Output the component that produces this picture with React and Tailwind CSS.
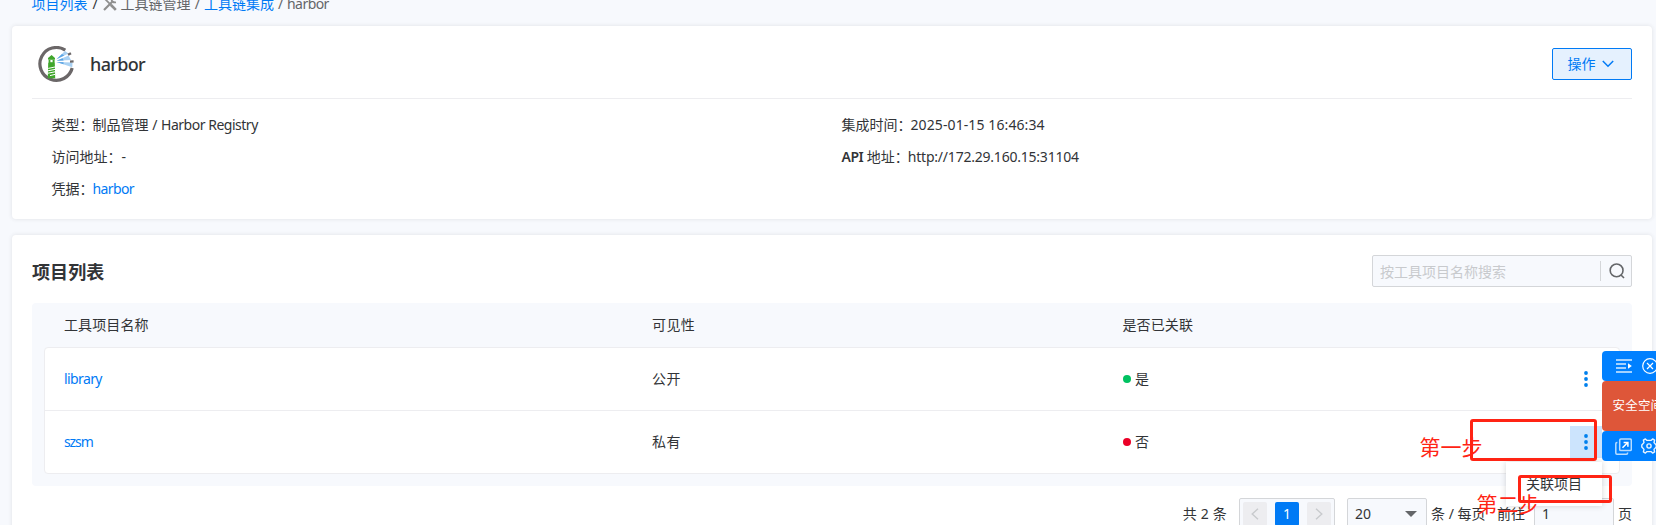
import React from "react";

function Logo() {
  return (
    <svg viewBox="0 0 36 36" className="h-9 w-9">
      <path d="M27.3 4.2A16.4 16.4 0 1 0 34.2 22" fill="none" stroke="#6b6768" strokeWidth="3.2" />
      <path d="M18.5 13.2 27 5l3.5 2.6zM18.5 14.8 30.5 9.5l2.5 4.6zM18.5 16 34.5 16.5l-.2 4.8z" fill="#a9d1f3" />
      <path d="M18.5 13.2 24 8l2.2 1.6zM18.5 14.8l6-2.6 1.2 2.4zM18.5 16l7 .3v2z" fill="#5ba4e4" />
      <path d="M30 8.8l3-1.6M32 15.6l3.6-.2" stroke="#6b6768" strokeWidth="2.4" />
      <path d="M13.6 9 17 12v1.6H10V12zM10.2 16.8h6.6l.4 15.4H9.8z" fill="#40a62c" />
      <path d="M10.6 13.4h6v3.6h-6z" fill="#40a62c" />
      <path d="M12.4 14h2.2v2.2h-2.2z" fill="#fff" />
      <path d="M10.2 22.4l6.8-1.4M10 24.8l7-1.4M10 27.2l7-1.4M12 29.6l5-1.2" stroke="#fff" strokeWidth="1" />
    </svg>
  );
}

function Tools() {
  return (
    <svg viewBox="0 0 14 14" className="h-3.5 w-3.5" fill="none" stroke="#8f8f8f">
      <path d="M1 13 9.5 4.5" strokeWidth="2.2" />
      <path d="M8.6 1.2c-.4 2.8 1.4 4.6 4.4 4.2" strokeWidth="1.8" />
      <path d="M1 1 12.6 12.6" strokeWidth="1.8" />
      <path d="M8 8l4.8 4.8" strokeWidth="2.6" />
    </svg>
  );
}

function More() {
  return (
    <svg viewBox="0 0 4 16" className="h-4 w-1" fill="#0080ed">
      <circle cx="2" cy="2" r="1.9" />
      <circle cx="2" cy="8" r="1.9" />
      <circle cx="2" cy="14" r="1.9" />
    </svg>
  );
}

function Field({ label, children }) {
  return (
    <div className="flex h-8 items-center">
      <span className="-mr-px">{label}</span>
      {children}
    </div>
  );
}

function Row({ name, nameClass, visibility, linked, active, last }) {
  return (
    <div className={`flex items-center pl-[19px] ${last ? "h-[62px]" : "h-[63px] border-b border-[#ededf0]"}`}>
      <span className={`w-[588px] text-[#007af5] ${nameClass}`}>{name}</span>
      <span className="w-[471px] tracking-[0.6px]">{visibility}</span>
      <span className="flex grow items-center gap-1">
        <i className={`h-2 w-2 rounded-full ${linked ? "bg-[#00c261]" : "bg-[#eb0027]"}`} />
        {linked ? "是" : "否"}
      </span>
      <button className={`mr-[17px] flex h-8 w-8 items-center justify-center ${active ? "bg-[#cce4fd]" : ""}`}>
        <More />
      </button>
    </div>
  );
}

export default function App() {
  return (
    <div className="relative h-[525px] w-[1656px] overflow-hidden bg-[#f7f9fd] font-['Noto_Sans','Noto_Sans_CJK_SC',sans-serif] text-[14px] leading-5 text-[#323437]">
      <div className="-mt-[6px] flex h-5 items-center pl-[31.5px] whitespace-pre text-[#646669]">
        <span className="text-[#007af5]">项目列表</span>
        <span className="w-[15px] text-center text-[#323437]">/</span>
        <Tools />
        <span className="ml-[4px]">工具链管理</span>
        <span className="w-[13.5px] text-center">/</span>
        <span className="text-[#007af5]">工具链集成</span>
        <span className="w-[13px] text-center">/</span>
        <span className="tracking-[-0.55px]">harbor</span>
      </div>

      <section className="mt-3 ml-3 h-[193px] w-[1640px] rounded bg-white px-5 shadow-[0_0_4px_rgba(50,52,55,0.12)]">
        <header className="flex h-[73px] items-center border-b border-[#ededf0] pl-1.5">
          <div className="pt-1"><Logo /></div>
          <h1 className="ml-4 grow pt-1 text-[18px] font-medium tracking-[-0.65px]">harbor</h1>
          <button className="mt-[3px] flex h-8 w-20 items-center justify-center gap-1.5 rounded-[2px] border border-[#007af5] bg-[#e5f1fe] pr-[3px] text-[#007af5]">
            操作
            <svg viewBox="0 0 12 8" className="h-2 w-3" fill="none" stroke="#007af5" strokeWidth="1.5"><path d="M.8 1 6 6.2 11.2 1" /></svg>
          </button>
        </header>
        <div className="flex pt-[10px] pl-[19.5px]">
          <div className="w-[790px]">
            <Field label="类型："><span className="whitespace-pre">制品管理 / <span className="tracking-[-0.48px]">Harbor Registry</span></span></Field>
            <Field label="访问地址："><span className="ml-px">-</span></Field>
            <Field label="凭据："><span className="tracking-[-0.6px] text-[#007af5]">harbor</span></Field>
          </div>
          <div>
            <Field label="集成时间："><span className="tracking-[0.1px]">2025-01-15 16:46:34</span></Field>
            <Field label={<><b className="font-semibold tracking-[-0.5px]">API</b> 地址：</>}><span className="tracking-[-0.22px]">http://172.29.160.15:31104</span></Field>
          </div>
        </div>
      </section>

      <section className="mt-4 ml-3 h-[320px] w-[1640px] rounded bg-white px-5 pt-5 shadow-[0_0_4px_rgba(50,52,55,0.12)]">
        <div className="flex h-8 items-center justify-between">
          <h2 className="pt-0.5 text-[18px] font-bold tracking-[0.1px]">项目列表</h2>
          <div className="flex h-8 w-[260px] items-center rounded-[2px] border border-[#d4d6d9] bg-[#f7f9fd] pl-[7px]">
            <span className="grow pt-0.5 text-[#c8cacd]">按工具项目名称搜索</span>
            <span className="h-5 w-px bg-[#d4d6d9]" />
            <svg viewBox="0 0 16 16" className="mr-[6px] ml-2 h-4 w-4" fill="none" stroke="#646669" strokeWidth="1.6"><circle cx="7.6" cy="7.4" r="6.4" /><path d="m12 12 3 3" /></svg>
          </div>
        </div>
        <div className="mt-4 h-[183px] rounded bg-[#f7f9fd] px-3">
          <div className="flex h-11 items-center pl-5 tracking-[0.1px]">
            <span className="w-[588px]">工具项目名称</span>
            <span className="w-[470.5px] tracking-[0.4px]">可见性</span>
            <span>是否已关联</span>
          </div>
          <div className="h-[127px] rounded border border-[#ededf0] bg-white">
            <Row name="library" nameClass="tracking-[-0.6px]" visibility="公开" linked />
            <Row name="szsm" nameClass="tracking-[-1.1px]" visibility="私有" active last />
          </div>
        </div>
        <div className="mt-3 flex h-8 items-center justify-end whitespace-pre">
          <span className="mr-3 tracking-[0.2px]">共 2 条</span>
          <div className="flex h-8 w-24 items-center gap-2 rounded-[2px] border border-[#d4d6d9] bg-[#f7f9fd] px-[3px]">
            <span className="flex h-6 w-6 items-center justify-center rounded-[2px] bg-[#ededf0]">
              <svg viewBox="0 0 8 12" className="h-3 w-2" fill="none" stroke="#c8cacd" strokeWidth="1.4"><path d="M7 .8 1.2 6 7 11.2" /></svg>
            </span>
            <span className="flex h-6 w-6 items-center justify-center rounded-[2px] bg-[#007af5] text-white">1</span>
            <span className="flex h-6 w-6 items-center justify-center rounded-[2px] bg-[#ededf0]">
              <svg viewBox="0 0 8 12" className="h-3 w-2" fill="none" stroke="#c8cacd" strokeWidth="1.4"><path d="M1 .8 6.8 6 1 11.2" /></svg>
            </span>
          </div>
          <div className="ml-3 flex h-8 w-20 items-center justify-between rounded-[2px] border border-[#d4d6d9] bg-[#f7f9fd] pr-[9px] pl-[7px]">
            20
            <svg viewBox="0 0 12 6" className="h-1.5 w-3" fill="#646669"><path d="M0 0h12L6 6z" /></svg>
          </div>
          <span className="ml-1 w-[66px]">条 / 每页</span>
          <span className="w-[37px]">前往</span>
          <div className="flex h-8 w-20 items-center rounded-[2px] border border-[#d4d6d9] bg-[#f7f9fd] pl-[7px]">1</div>
          <span className="ml-1">页</span>
        </div>
      </section>

      <div className="absolute top-[462px] left-[1506px] flex h-11 w-24 items-center justify-center bg-white shadow-[0_0_6px_rgba(50,52,55,0.2)]">
        <span className="pb-px">关联项目</span>
      </div>

      <aside className="absolute top-[351px] left-[1602px] w-20 text-white">
        <div className="flex h-[30px] items-center rounded-l bg-[#0080ff] pl-3.5">
          <svg viewBox="0 0 16 14" className="h-3.5 w-4" fill="none" stroke="#d9ecff" strokeWidth="1.4"><path d="M0 1h16M0 5h10M0 9h10M0 13h16" /><path d="M12 4.2 15.8 7 12 9.8z" fill="#fff" stroke="none" /></svg>
          <svg viewBox="0 0 16 16" className="ml-[10px] h-4 w-4" fill="none" stroke="#fff" strokeWidth="1.2"><circle cx="8" cy="8" r="7.3" /><path d="m5 5 6 6M11 5l-6 6" /></svg>
        </div>
        <div className="flex h-[50px] items-center rounded-l bg-[#de5639] pl-[10.5px] text-[12.5px] tracking-[0.2px] whitespace-nowrap">安全空间</div>
        <div className="flex h-[30px] items-center rounded-l bg-[#0080ff] pl-[13px]">
          <svg viewBox="0 0 17 17" className="h-[17px] w-[17px]" fill="none" stroke="#b8dcff" strokeWidth="1.5"><rect x="4.7" y="1" width="11.6" height="11.6" rx="1.2" /><path d="M2.4 4.6H2q-1.2 0-1.2 1.2V15q0 1.2 1.2 1.2h9.4q1.2 0 1.2-1.2v-.4" /><path d="M7.5 9.8 12.8 4.5M8.6 4.4h4.3v4.3" stroke="#fff" /></svg>
          <svg viewBox="0 0 16 16" className="ml-[9px] h-4 w-4" fill="none" stroke="#e8f3ff" strokeWidth="1.4" strokeLinejoin="round"><path d="M4.4.9 6 2.4H10L11.6.9 13.6 2.1 13 4.6 15.2 7V9L13 11.4 13.6 13.9 11.6 15.1 10 13.6H6L4.4 15.1 2.4 13.9 3 11.4.8 9V7L3 4.6 2.4 2.1z" /><circle cx="8" cy="8" r="2.1" /></svg>
        </div>
      </aside>

      <div className="absolute top-[419px] left-[1470px] h-[42px] w-[127px] rounded-[3px] border-3 border-[#ff2414]" />
      <div className="absolute top-[475px] left-[1518px] h-[28px] w-[94px] rounded-[3px] border-3 border-[#ff2414]" />
      <span className="absolute top-[433px] left-[1419.5px] text-[21px] leading-7 whitespace-nowrap text-[#ff2414]">第一步</span>
      <span className="absolute top-[490px] left-[1476.5px] text-[21px] leading-7 whitespace-nowrap text-[#ff2414]">第二步</span>
    </div>
  );
}
